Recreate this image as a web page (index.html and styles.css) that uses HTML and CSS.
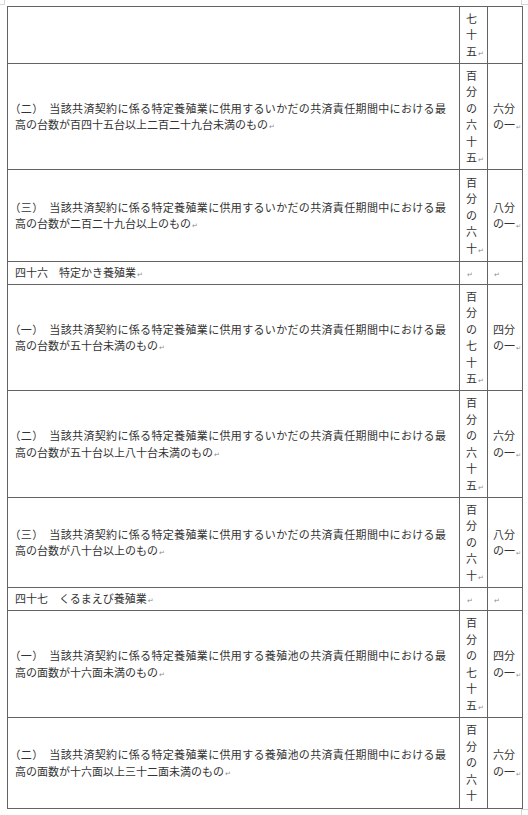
FILE: index.html
```html
<!DOCTYPE html>
<html lang="ja">
<head>
<meta charset="utf-8">
<link rel="stylesheet" href="styles.css">
</head>
<body>
<div class="corner corner-tl"></div>
<div class="corner corner-tr"></div>
<div class="corner corner-br"></div>
<table class="sheet">
  <colgroup><col class="c1"><col class="c2"><col class="c3"></colgroup>
  <tr class="r57">
    <td class="item"></td>
    <td class="rate">七<br>十<br>五<span class="pm">↵</span></td>
    <td class="frac"></td>
  </tr>
  <tr class="r106">
    <td class="item"><span class="jl"><span class="par">（二）</span>　当該共済契約に係る特定養殖業に供用するいかだの共済責任期間中における最</span><br>高の台数が百四十五台以上二百二十九台未満のもの<span class="pm">↵</span></td>
    <td class="rate">百<br>分<br>の<br>六<br>十<br>五<span class="pm">↵</span></td>
    <td class="frac">六分<br>の一<span class="pm sm">↵</span></td>
  </tr>
  <tr class="r92">
    <td class="item"><span class="jl"><span class="par">（三）</span>　当該共済契約に係る特定養殖業に供用するいかだの共済責任期間中における最</span><br>高の台数が二百二十九台以上のもの<span class="pm">↵</span></td>
    <td class="rate">百<br>分<br>の<br>六<br>十<span class="pm">↵</span></td>
    <td class="frac">八分<br>の一<span class="pm sm">↵</span></td>
  </tr>
  <tr class="r23">
    <td class="item">四十六　特定かき養殖業<span class="pm">↵</span></td>
    <td class="rate"><span class="pm">↵</span></td>
    <td class="frac"><span class="pm">↵</span></td>
  </tr>
  <tr class="r106">
    <td class="item"><span class="jl"><span class="par">（一）</span>　当該共済契約に係る特定養殖業に供用するいかだの共済責任期間中における最</span><br>高の台数が五十台未満のもの<span class="pm">↵</span></td>
    <td class="rate">百<br>分<br>の<br>七<br>十<br>五<span class="pm">↵</span></td>
    <td class="frac">四分<br>の一<span class="pm sm">↵</span></td>
  </tr>
  <tr class="r107">
    <td class="item"><span class="jl"><span class="par">（二）</span>　当該共済契約に係る特定養殖業に供用するいかだの共済責任期間中における最</span><br>高の台数が五十台以上八十台未満のもの<span class="pm">↵</span></td>
    <td class="rate">百<br>分<br>の<br>六<br>十<br>五<span class="pm">↵</span></td>
    <td class="frac">六分<br>の一<span class="pm sm">↵</span></td>
  </tr>
  <tr class="r90">
    <td class="item"><span class="jl"><span class="par">（三）</span>　当該共済契約に係る特定養殖業に供用するいかだの共済責任期間中における最</span><br>高の台数が八十台以上のもの<span class="pm">↵</span></td>
    <td class="rate">百<br>分<br>の<br>六<br>十<span class="pm">↵</span></td>
    <td class="frac">八分<br>の一<span class="pm sm">↵</span></td>
  </tr>
  <tr class="r23">
    <td class="item">四十七　くるまえび養殖業<span class="pm">↵</span></td>
    <td class="rate"><span class="pm">↵</span></td>
    <td class="frac"><span class="pm">↵</span></td>
  </tr>
  <tr class="r107">
    <td class="item"><span class="jl"><span class="par">（一）</span>　当該共済契約に係る特定養殖業に供用する養殖池の共済責任期間中における最</span><br>高の面数が十六面未満のもの<span class="pm">↵</span></td>
    <td class="rate">百<br>分<br>の<br>七<br>十<br>五<span class="pm">↵</span></td>
    <td class="frac">四分<br>の一<span class="pm sm">↵</span></td>
  </tr>
  <tr class="r91">
    <td class="item"><span class="jl"><span class="par">（二）</span>　当該共済契約に係る特定養殖業に供用する養殖池の共済責任期間中における最</span><br>高の面数が十六面以上三十二面未満のもの<span class="pm">↵</span></td>
    <td class="rate">百<br>分<br>の<br>六<br>十</td>
    <td class="frac">六分<br>の一<span class="pm sm">↵</span></td>
  </tr>
</table>
</body>
</html>
```

FILE: styles.css
```css
html, body {
  margin: 0;
  padding: 0;
  background: #ffffff;
}

body {
  position: relative;
  width: 528px;
  height: 815px;
  overflow: hidden;
  font-family: "Noto Sans CJK JP", "Noto Sans", sans-serif;
  font-size: 11px;
  line-height: 16.5px;
  color: #333333;
}

.sheet {
  margin: 6px 0 0 7px;
  border-collapse: collapse;
  table-layout: fixed;
  width: 515px;
}

.c1 { width: 452px; }
.c2 { width: 28px; }
.c3 { width: 35px; }

.r57 { height: 57px; }
.r106 { height: 106px; }
.r107 { height: 107px; }
.r92 { height: 92px; }
.r91 { height: 91px; }
.r90 { height: 90px; }
.r23 { height: 23px; }

.sheet td {
  border: 1px solid #646464;
  padding: 2px 0 3px 0;
  vertical-align: middle;
  white-space: nowrap;
  overflow: visible;
}

.item {
  padding-left: 7px !important;
}

.rate {
  padding-left: 6px !important;
}

.frac {
  padding-left: 5px !important;
}

.jl {
  letter-spacing: 0.34px;
}

.par {
  font-feature-settings: "halt";
}

.pm {
  font-family: "DejaVu Sans", sans-serif;
  font-size: 7px;
  line-height: 0;
  color: #8c8c8c;
  margin-left: 1px;
}

.pm.sm {
  font-size: 6px;
}

.corner {
  position: absolute;
  border-color: #d6d6d6;
  border-style: solid;
  border-width: 0;
}

.corner-tl {
  left: 0;
  top: 0;
  width: 4px;
  height: 4px;
  border-right-width: 1px;
  border-bottom-width: 1px;
}

.corner-tr {
  left: 521px;
  top: 0;
  width: 6px;
  height: 4px;
  border-left-width: 1px;
  border-bottom-width: 1px;
}

.corner-br {
  left: 521px;
  top: 809px;
  width: 7px;
  height: 6px;
  border-left-width: 1px;
  border-top-width: 1px;
}
```
